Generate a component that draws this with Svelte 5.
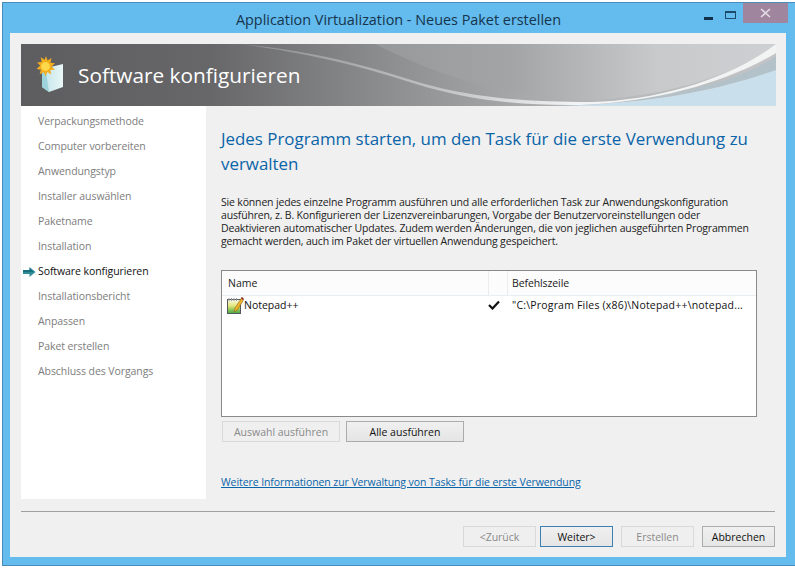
<script lang="ts">
  interface Step {
    label: string;
    current?: boolean;
  }

  const steps: Step[] = [
    { label: 'Verpackungsmethode' },
    { label: 'Computer vorbereiten' },
    { label: 'Anwendungstyp' },
    { label: 'Installer auswählen' },
    { label: 'Paketname' },
    { label: 'Installation' },
    { label: 'Software konfigurieren', current: true },
    { label: 'Installationsbericht' },
    { label: 'Anpassen' },
    { label: 'Paket erstellen' },
    { label: 'Abschluss des Vorgangs' }
  ];
</script>

<div class="page">
  <div class="window">
    <header class="titlebar">
      <div class="title">Application Virtualization - Neues Paket erstellen</div>
      <div class="controls">
        <span class="min"></span>
        <span class="max"></span>
        <span class="close">
          <svg width="11" height="10" viewBox="0 0 11 10"><path d="M1 1l9 8M10 1l-9 8" stroke="#e4dbe6" stroke-width="1.6" fill="none"/></svg>
        </span>
      </div>
    </header>

    <div class="client">
      <div class="banner">
        <svg class="swoosh" width="755" height="62" viewBox="0 0 755 62" preserveAspectRatio="none">
          <defs>
            <linearGradient id="bg" x1="0" x2="1" y1="0" y2="0">
              <stop offset="0" stop-color="#5d5d5f"/>
              <stop offset="0.25" stop-color="#676769"/>
              <stop offset="0.5" stop-color="#8f9092"/>
              <stop offset="0.75" stop-color="#b4b5b7"/>
              <stop offset="1" stop-color="#c4c5c7"/>
            </linearGradient>
            <linearGradient id="upper" x1="0" x2="1" y1="0" y2="0">
              <stop offset="0" stop-color="#97989a"/>
              <stop offset="0.35" stop-color="#a3a5a7"/>
              <stop offset="0.7" stop-color="#c8c9cb"/>
              <stop offset="1" stop-color="#cdd0d2"/>
            </linearGradient>
            <linearGradient id="stripe" x1="0" x2="1" y1="0" y2="0">
              <stop offset="0" stop-color="#8c8d8f"/>
              <stop offset="0.4" stop-color="#c6c7c9"/>
              <stop offset="0.62" stop-color="#f2f3f3"/>
              <stop offset="1" stop-color="#f2f3f3"/>
            </linearGradient>
            <linearGradient id="box" x1="0" x2="1" y1="0" y2="0">
              <stop offset="0" stop-color="#bfe3e8"/>
              <stop offset="1" stop-color="#eaf7f7"/>
            </linearGradient>
          </defs>
          <rect width="755" height="62" fill="url(#bg)"/>
          <path d="M354 0C410 28 470 50 560 57C660 52 720 26 755 1V0Z" fill="url(#upper)"/>
          <path d="M430 62L755 62L755 24C700 48 620 60 530 62Z" fill="#c9dfeb"/>
          <path d="M755 12C715 40 640 56 560 59C640 58 710 42 755 26Z" fill="#b3c1c9"/>
          <path d="M219 0C300 8 350 23 400 39C450 53 500 58 570 58C640 56 710 34 755 0V9C710 36 640 58 560 61C490 62 440 54 395 40C345 24 295 10 219 0Z" fill="url(#stripe)"/>
        </svg>
        <svg class="box-icon" width="30" height="40" viewBox="0 0 30 40">
          <path d="M7 15L28 10L28 33L14 38L7 33Z" fill="url(#box)"/>
          <path d="M7 15L11 18L14 38L7 33Z" fill="#9dd4db"/>
          <path d="M11 2l1.600 4.600 4-2.700-1.200 4.800 4.600.6-3.400 3.200 3.400 3.200-4.700.4 1 4.500-4-2.600-1.700 4.500-1.700-4.500-4.300 2.400 1.300-4.600-4.300-.9 3.600-3.300-3.200-3.200 4.700-.5-1-4.700 4 2.500z" fill="#f4ad1c"/>
          <circle cx="10.500" cy="12.500" r="4.400" fill="#fdd94a"/>
        </svg>
        <div class="banner-title">Software konfigurieren</div>
      </div>

      <div class="body">
        <nav class="steps">
          {#each steps as step}
            <div class="step" class:current={step.current}>
              {#if step.current}
                <svg class="arrow" width="13" height="10" viewBox="0 0 13 10">
                  <path d="M0 3h6.500V0L12.500 5L6.500 10V7H0Z" fill="#2f8c97"/>
                  <path d="M0 3h6.500V1.500L11 5H0Z" fill="#176f80"/>
                </svg>
              {/if}
              {step.label}
            </div>
          {/each}
        </nav>

        <main class="content">
          <h1>Jedes Programm starten, um den Task für die erste Verwendung zu verwalten</h1>
          <p class="desc">Sie können jedes einzelne Programm ausführen und alle erforderlichen Task zur Anwendungskonfiguration ausführen, z. B. Konfigurieren der Lizenzvereinbarungen, Vorgabe der Benutzervoreinstellungen oder Deaktivieren automatischer Updates. Zudem werden Änderungen, die von jeglichen ausgeführten Programmen gemacht werden, auch im Paket der virtuellen Anwendung gespeichert.</p>

          <div class="list">
            <div class="row head">
              <div class="col-name">Name</div>
              <div class="col-check"></div>
              <div class="col-cmd">Befehlszeile</div>
            </div>
            <div class="row">
              <div class="col-name">
                <svg width="17" height="17" viewBox="0 0 17 17">
                  <defs>
                    <linearGradient id="pad" x1="0" x2="0" y1="0" y2="1">
                      <stop offset="0" stop-color="#f7f7e8"/>
                      <stop offset="0.45" stop-color="#e3e77c"/>
                      <stop offset="1" stop-color="#3fa83f"/>
                    </linearGradient>
                  </defs>
                  <rect x="0.500" y="2.500" width="13" height="14" fill="url(#pad)" stroke="#55585c"/>
                  <path d="M2 1v3M4.500 1v3M7 1v3M9.500 1v3" stroke="#9a9da0"/>
                  <path d="M14.500 1L8 11L7 15L10.500 13L16.500 3Z" fill="#eeb02a" stroke="#7a5a18" stroke-width="0.500"/>
                  <path d="M14.500 0.500L16.500 2.500" stroke="#8b1c12" stroke-width="1.500"/>
                </svg>
                <span>Notepad++</span>
              </div>
              <div class="col-check">
                <svg width="12" height="10" viewBox="0 0 12 10"><path d="M1 5l3.500 3.500L11 1.500" stroke="#111" stroke-width="2.200" fill="none"/></svg>
              </div>
              <div class="col-cmd">"C:\Program Files (x86)\Notepad++\notepad...</div>
            </div>
          </div>

          <div class="list-actions">
            <button class="btn wide" disabled>Auswahl ausführen</button>
            <button class="btn wide">Alle ausführen</button>
          </div>

          <a class="more" href="#more">Weitere Informationen zur Verwaltung von Tasks für die erste Verwendung</a>
        </main>
      </div>

      <footer class="footer">
        <button class="btn" disabled>&lt;Zurück</button>
        <button class="btn primary">Weiter&gt;</button>
        <button class="btn gap" disabled>Erstellen</button>
        <button class="btn gap">Abbrechen</button>
      </footer>
    </div>
  </div>
</div>

<style>
  :global(body) {
    margin: 0;
    background: #fff;
  }

  .page {
    width: 795px;
    height: 568px;
    padding: 2px 0 2px 2px;
    box-sizing: border-box;
    overflow: hidden;
    font-family: "Open Sans", "Noto Sans", sans-serif;
    font-size: 10.5px;
    color: #1a1a1a;
  }

  .window {
    height: 564px;
    width: 800px;
    box-sizing: border-box;
    background: #63bbee;
    border: 1px solid #4a8db8;
    display: flex;
    flex-direction: column;
    padding: 0 0 8px 7px;
  }

  .titlebar {
    height: 30px;
    width: 777px;
    flex: none;
    display: flex;
    position: relative;
    justify-content: center;
    align-items: center;
  }

  .title {
    font-size: 14.4px;
    color: #16344c;
    margin-top: 2px;
  }

  .controls {
    position: absolute;
    top: 0;
    right: -1px;
    display: flex;
    align-items: flex-start;
  }

  .min {
    width: 9px;
    height: 3px;
    background: #12304a;
    margin: 14px 12px 0 0;
  }

  .max {
    width: 9px;
    height: 5px;
    border: 1px solid #1c4a6a;
    border-top-width: 2px;
    margin: 8px 7px 0 0;
  }

  .close {
    width: 45px;
    height: 20px;
    background: #a0859e;
    display: flex;
    align-items: center;
    justify-content: center;
  }

  .client {
    flex: 1;
    width: 776px;
    box-sizing: border-box;
    background: #f0f0f0;
    padding: 11px 10px 0 11px;
    display: flex;
    flex-direction: column;
  }

  .banner {
    height: 62px;
    flex: none;
    position: relative;
    display: flex;
    align-items: center;
    padding-left: 14px;
  }

  .swoosh {
    position: absolute;
    inset: 0;
  }

  .box-icon {
    position: relative;
    margin-top: -2px;
  }

  .banner-title {
    position: relative;
    color: #fff;
    font-size: 20.8px;
    margin-left: 13px;
  }

  .body {
    height: 393px;
    flex: none;
    display: flex;
  }

  .steps {
    width: 185px;
    flex: none;
    background: #fff;
    padding-top: 3px;
    box-sizing: border-box;
    letter-spacing: -0.08px;
  }

  .step {
    height: 25px;
    line-height: 25px;
    padding-left: 17px;
    color: #7d7d7d;
    position: relative;
  }

  .step.current {
    color: #111;
  }

  .arrow {
    position: absolute;
    left: 2px;
    top: 8px;
  }

  .content {
    flex: 1;
    padding: 20px 19px 0 15px;
    min-width: 0;
  }

  h1 {
    margin: 0;
    font-size: 16.9px;
    line-height: 25px;
    font-weight: 400;
    color: #0a64a8;
  }

  .desc {
    margin: 20px 0 0;
    line-height: 13px;
    color: #222;
    letter-spacing: -0.17px;
  }

  .list {
    margin-top: 22px;
    height: 147px;
    box-sizing: border-box;
    border: 1px solid #8a8a8a;
    background: #fff;
  }

  .row {
    display: flex;
    height: 18px;
    align-items: center;
    color: #111;
  }

  .row.head {
    height: 25px;
    background: #fcfcfc;
    border-bottom: 1px solid #e8eef2;
    box-sizing: border-box;
    color: #222;
  }

  .col-name {
    width: 266px;
    box-sizing: border-box;
    padding-left: 6px;
    display: flex;
    align-items: center;
  }

  .row:not(.head) .col-name {
    padding-left: 5px;
  }

  .col-check {
    width: 18px;
    height: 100%;
    display: flex;
    align-items: center;
  }

  .head .col-check {
    border-left: 1px solid #ececec;
    border-right: 1px solid #ececec;
  }

  .col-cmd {
    padding-left: 6px;
    white-space: nowrap;
    letter-spacing: 0.2px;
  }

  .head .col-cmd {
    padding-left: 4px;
    letter-spacing: -0.1px;
  }

  .list-actions {
    display: flex;
    gap: 6px;
    margin: 4px 0 0 1px;
  }

  .btn {
    width: 73px;
    height: 21px;
    padding: 0;
    box-sizing: border-box;
    font: inherit;
    color: #111;
    border: 1px solid #acacac;
    background: linear-gradient(#f0f0f0, #e5e5e5);
  }

  .btn.wide {
    width: 118px;
  }

  .btn:disabled {
    color: #8a8a8a;
    border-color: #d9d9d9;
    background: #efefef;
  }

  .btn.primary {
    border-color: #3c7fb1;
  }

  .more {
    display: block;
    margin-top: 33px;
    color: #0a64a8;
    text-decoration: underline;
    white-space: nowrap;
    letter-spacing: -0.08px;
  }

  .footer {
    margin-top: 12px;
    border-top: 1px solid #a0a0a0;
    padding-top: 14px;
    display: flex;
    justify-content: flex-end;
    gap: 4px;
    margin-right: 1px;
  }

  .gap {
    margin-left: 4px;
  }
</style>
